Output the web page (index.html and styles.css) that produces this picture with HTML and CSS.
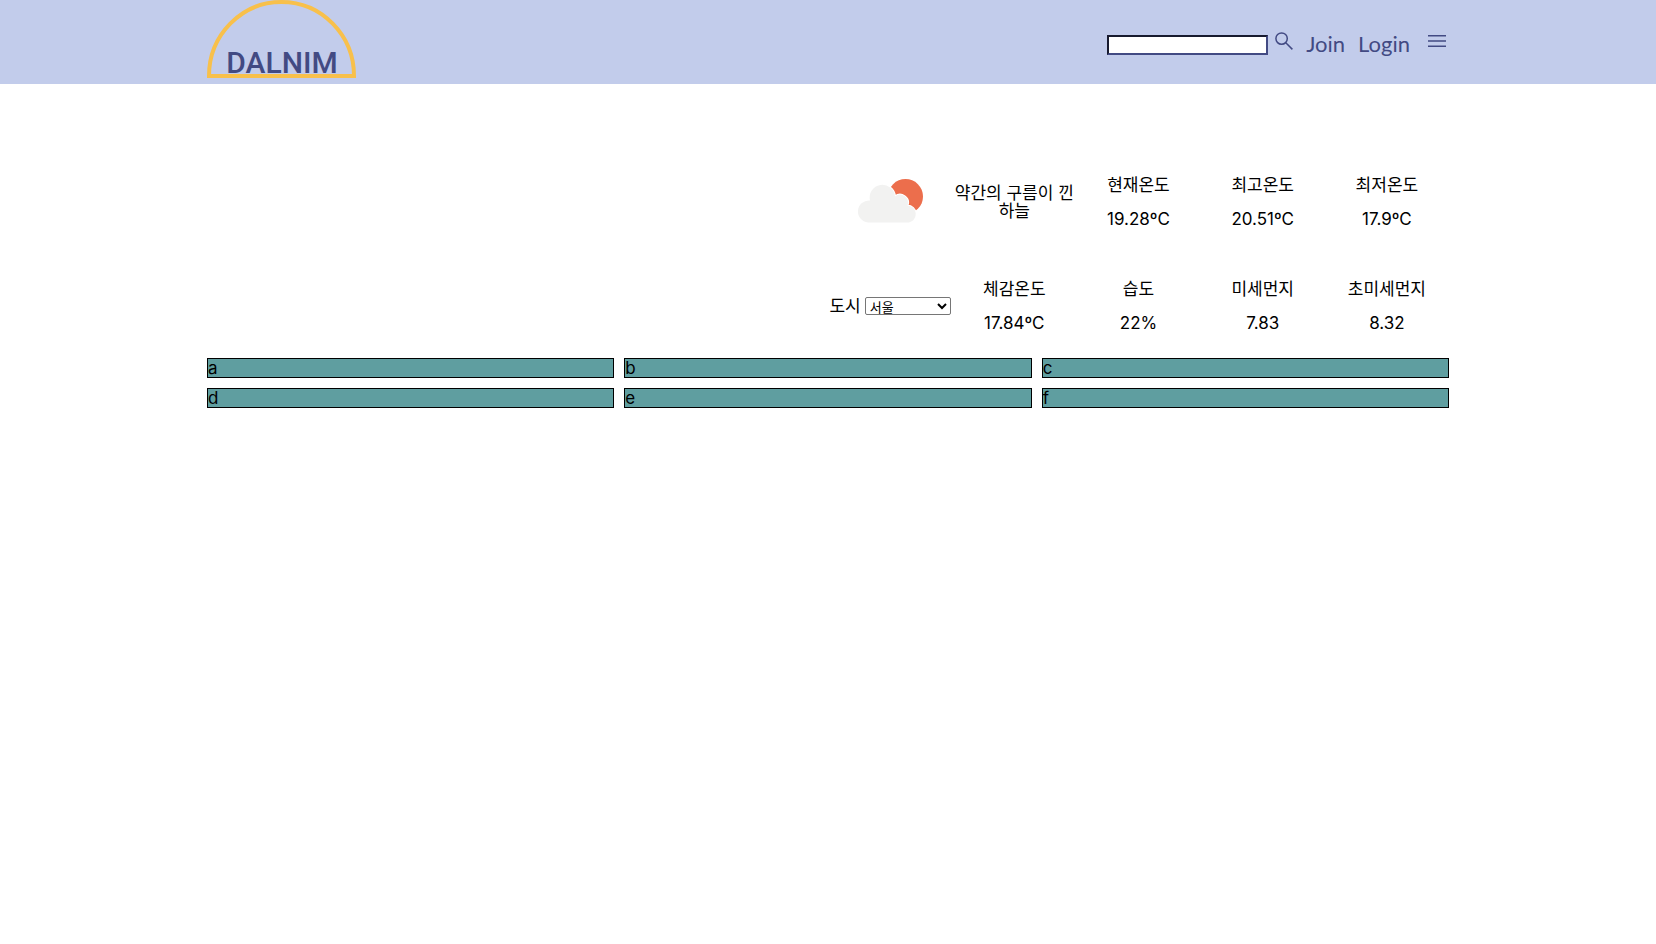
FILE: index.html
```html
<!DOCTYPE html>
<html lang="ko">
<head>
<meta charset="utf-8">
<title>DALNIM</title>
<link rel="stylesheet" href="styles.css">
</head>
<body>
<header class="header">
  <div class="container header-inner">
    <a class="logo" href="#" aria-label="DALNIM">
      <svg width="149" height="84" viewBox="0 0 149 84">
        <path d="M2 76A72.500 74 0 0 1 147 76Z" fill="none" stroke="#f8c04b" stroke-width="4"/>
        <text class="logo-text" x="75" y="73" text-anchor="middle">DALNIM</text>
      </svg>
    </a>
    <nav class="nav">
      <form class="search">
        <input class="search-input" type="text" aria-label="검색">
        <button class="icon-button" type="button" aria-label="검색">
          <svg width="18" height="18" viewBox="0 0 18 18" fill="none" stroke="currentColor" stroke-width="1.500"><circle cx="6.600" cy="6.600" r="5.700"/><path d="M10.800 10.800L17.400 17.400"/></svg>
        </button>
      </form>
      <a class="nav-link" href="#">Join</a>
      <a class="nav-link" href="#">Login</a>
      <button class="icon-button menu" type="button" aria-label="메뉴">
        <svg width="18" height="18" viewBox="0 0 18 18" fill="none" stroke="currentColor" stroke-width="1.500"><path d="M0 3.700H18M0 9H18M0 14.300H18"/></svg>
      </button>
    </nav>
  </div>
</header>
<main class="container">
  <section class="weather">
    <div class="cell">
      <svg width="66" height="46" viewBox="0 0 66 46">
        <circle cx="48.500" cy="17.500" r="17.500" fill="#ec6e4c"/>
        <path d="M11 43.500A11 11 0 0 1 13 21.500A12.700 12.700 0 1 1 38 17.500A8 8 0 0 1 50.500 26.500A8.600 8.600 0 0 1 52 43.500Z" fill="#f2f2f1" stroke="#fff" stroke-width="2" paint-order="stroke"/>
      </svg>
    </div>
    <div class="cell">약간의 구름이 낀 하늘</div>
    <div class="cell"><span>현재온도</span><span>19.28ºC</span></div>
    <div class="cell"><span>최고온도</span><span>20.51ºC</span></div>
    <div class="cell"><span>최저온도</span><span>17.9ºC</span></div>
    <div class="cell city">
      <label for="city">도시</label>
      <select id="city" class="city-select"><option>서울</option></select>
    </div>
    <div class="cell"><span>체감온도</span><span>17.84ºC</span></div>
    <div class="cell"><span>습도</span><span>22%</span></div>
    <div class="cell"><span>미세먼지</span><span>7.83</span></div>
    <div class="cell"><span>초미세먼지</span><span>8.32</span></div>
  </section>
  <section class="tiles">
    <div class="tile">a</div>
    <div class="tile">b</div>
    <div class="tile">c</div>
    <div class="tile">d</div>
    <div class="tile">e</div>
    <div class="tile">f</div>
  </section>
</main>
</body>
</html>
```
FILE: styles.css
```css
* { box-sizing: border-box; }
body {
  margin: 0;
  background: #fff;
  color: #000;
  font: 17px/18px Inter, "Noto Sans CJK KR", sans-serif;
}
.container { width: 75%; margin: 0 auto; }
.header { background: #c2cceb; color: #424a83; }
.header-inner {
  display: flex;
  justify-content: space-between;
  align-items: flex-start;
  min-height: 84px;
}
.logo, .logo svg { display: block; }
.logo-text {
  font: 500 30px Roboto, sans-serif;
  fill: #424a83;
}
.nav {
  display: flex;
  align-items: center;
  gap: 13px;
  padding: 32px 3px 0 0;
}
.search { display: flex; align-items: center; align-self: stretch; gap: 7px; }
.search-input {
  width: 161px;
  height: 20px;
  padding: 0 2px;
  background: #fff;
  border: 2px inset #424a83;
  border-radius: 0;
}
.icon-button {
  display: flex;
  align-self: flex-start;
  padding: 0;
  border: 0;
  background: none;
  color: inherit;
}
.nav-link {
  color: inherit;
  font: 22px/24px Lato, sans-serif;
  padding-bottom: 2px;
  text-decoration: none;
}
.menu { margin-left: 5px; }
.weather {
  display: grid;
  grid-template-columns: repeat(5, 1fr);
  grid-auto-rows: 104px;
  width: 50%;
  margin-left: auto;
  padding-top: 66px;
}
.cell {
  display: flex;
  flex-direction: column;
  align-items: center;
  justify-content: center;
  gap: 16px;
  text-align: center;
  word-break: keep-all;
}
.city { flex-direction: row; gap: 4px; }
.city-select {
  width: 86px;
  height: 18px;
  padding: 0;
  border: 1px solid #767676;
  border-radius: 2px;
  background: #fff;
  color: #000;
  font: 13px/16px Inter, "Noto Sans CJK KR", sans-serif;
}
.tiles {
  display: grid;
  grid-template-columns: repeat(3, 1fr);
  gap: 10px;
}
.tile { background: #5f9ea0; border: 1px solid #000; }
```
